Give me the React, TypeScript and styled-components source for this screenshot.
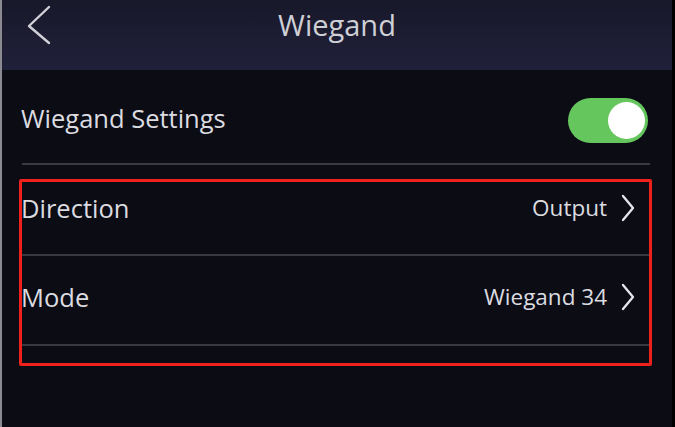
import React from "react";
import styled, { createGlobalStyle } from "styled-components";

const Global = createGlobalStyle`
  html, body { margin: 0; padding: 0; background: #0b0c14; }
  body { font-family: "Open Sans", "Noto Sans", sans-serif; }
`;

const Screen = styled.div`
  width: 675px;
  height: 427px;
  box-sizing: border-box;
  background: #0b0c14;
  border-left: 2px solid #8a8a90;
  border-right: 3px solid #000;
  display: flex;
  flex-direction: column;
  overflow: hidden;
`;

const Header = styled.header`
  height: 70px;
  flex: none;
  display: grid;
  grid-template-columns: 60px 1fr 60px;
  align-items: center;
  background: linear-gradient(180deg, #18182a 0%, #21203a 100%);
`;

const BackButton = styled.div`
  display: flex;
  align-items: center;
  padding-left: 24px;
  height: 100%;
  padding-bottom: 20px;
  box-sizing: border-box;
`;

const Title = styled.h1`
  margin: 0;
  text-align: center;
  font-size: 29px;
  font-weight: 400;
  color: #cfcfd6;
  padding-bottom: 22px;
`;

const Body = styled.main`
  padding: 26px 22px 0 20px;
  display: flex;
  flex-direction: column;
`;

const ToggleRow = styled.div`
  height: 48px;
  display: flex;
  align-items: center;
  justify-content: space-between;
  padding-bottom: 19px;
  border-bottom: 2px solid #3a3a40;
  margin-bottom: 14px;
`;

const Label = styled.span<{ $lift?: number }>`
  font-size: 25.5px;
  line-height: 1.36;
  color: #dcdce0;
  margin-left: -1px;
  margin-bottom: ${(p) => p.$lift ?? 0}px;
`;

const Toggle = styled.div<{ $on: boolean }>`
  width: 80px;
  height: 45px;
  margin-right: 2px;
  border-radius: 23px;
  background: ${(p) => (p.$on ? "#66c65e" : "#555")};
  display: flex;
  align-items: center;
  justify-content: ${(p) => (p.$on ? "flex-end" : "flex-start")};
  padding: 0 3px;
  box-sizing: border-box;
`;

const Knob = styled.div`
  width: 37px;
  height: 37px;
  border-radius: 50%;
  background: #fff;
`;

const Highlight = styled.section`
  border: 3px solid #f0201a;
  border-radius: 2px;
  margin-left: -3px;
  margin-right: -2px;
  display: flex;
  flex-direction: column;
  padding-bottom: 17px;
`;

const ItemRow = styled.div<{ $height: number; $top: number }>`
  height: ${(p) => p.$height}px;
  display: flex;
  align-items: flex-start;
  justify-content: space-between;
  padding: ${(p) => p.$top}px 14px 0 0;
  box-sizing: border-box;
  border-bottom: 2px solid #38383e;
`;

const Value = styled.span`
  display: flex;
  align-items: center;
  gap: 14px;
  margin-top: 2px;
  font-size: 22.5px;
  line-height: 1.36;
  color: #dcdce0;
`;

const Chevron = ({ size = 14, h = 28 }: { size?: number; h?: number }) => (
  <svg width={size} height={h} viewBox={`0 0 ${size} ${h}`} fill="none">
    <path
      d={`M2 2 L${size - 2} ${h / 2} L2 ${h - 2}`}
      stroke="#e6e6ea"
      strokeWidth="2.3"
      strokeLinecap="round"
      strokeLinejoin="round"
    />
  </svg>
);

const BackChevron = () => (
  <svg width="26" height="40" viewBox="0 0 26 40" fill="none">
    <path d="M23 2 L3 21 L23 38" stroke="#d0d0d6" strokeWidth="2.4" strokeLinecap="round" strokeLinejoin="round" />
  </svg>
);

const items = [
  { label: "Direction", value: "Output", height: 74, top: 9 },
  { label: "Mode", value: "Wiegand 34", height: 90, top: 24 },
];

export default function App() {
  return (
    <>
      <Global />
      <Screen>
        <Header>
          <BackButton>
            <BackChevron />
          </BackButton>
          <Title>Wiegand</Title>
          <div />
        </Header>
        <Body>
          <ToggleRow>
            <Label $lift={4}>Wiegand Settings</Label>
            <Toggle $on>
              <Knob />
            </Toggle>
          </ToggleRow>
          <Highlight>
            {items.map((it) => (
              <ItemRow key={it.label} $height={it.height} $top={it.top}>
                <Label>{it.label}</Label>
                <Value>
                  {it.value}
                  <Chevron />
                </Value>
              </ItemRow>
            ))}
          </Highlight>
        </Body>
      </Screen>
    </>
  );
}
